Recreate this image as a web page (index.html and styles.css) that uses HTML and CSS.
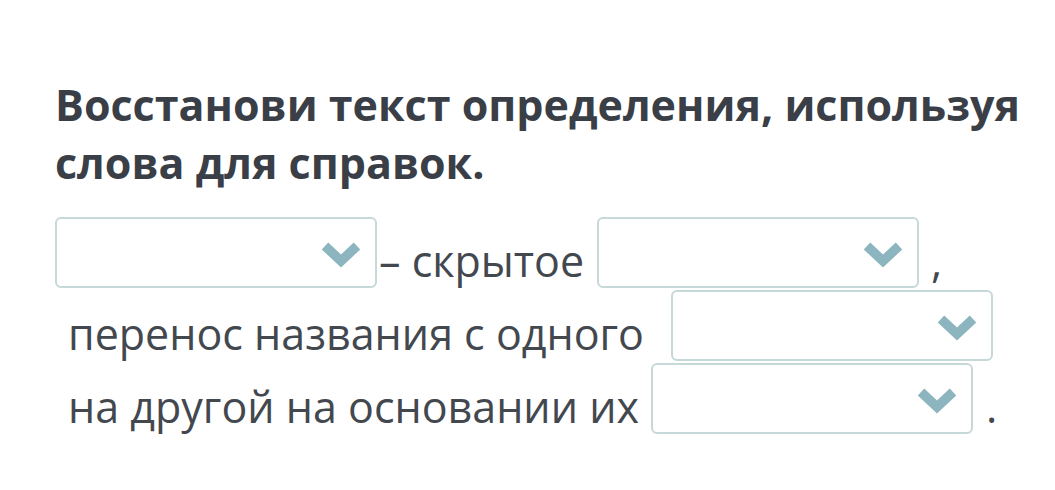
FILE: index.html
```html
<!DOCTYPE html>
<html lang="ru">
<head>
<meta charset="utf-8">
<link rel="stylesheet" href="styles.css">
</head>
<body>
<main class="task">
  <h1 class="title">Восстанови текст определения, используя слова для справок.</h1>
  <div class="cloze">
    <div class="line">
      <div class="select"><svg class="chev" viewBox="0 0 40 27"><polyline points="4,5 20,20 36,5"/></svg></div>
      <span class="word dash">– скрытое</span>
      <div class="select"><svg class="chev" viewBox="0 0 40 27"><polyline points="4,5 20,20 36,5"/></svg></div>
      <span class="word comma">,</span>
    </div>
    <div class="line">
      <span class="word text">перенос названия с одного</span>
      <div class="select sel-3"><svg class="chev" viewBox="0 0 40 27"><polyline points="4,5 20,20 36,5"/></svg></div>
    </div>
    <div class="line">
      <span class="word text">на другой на основании их</span>
      <div class="select sel-4"><svg class="chev" viewBox="0 0 40 27"><polyline points="4,5 20,20 36,5"/></svg></div>
      <span class="word period">.</span>
    </div>
  </div>
</main>
</body>
</html>
```

FILE: styles.css
```css
html, body {
  margin: 0;
  padding: 0;
  background: #ffffff;
}
.task {
  padding: 76px 0 0 55px;
  font-family: "Open Sans", "Noto Sans", sans-serif;
}
.title {
  margin: 0;
  font-size: 43px;
  font-weight: 700;
  line-height: 58px;
  color: #3a3f47;
  width: 990px;
}
.cloze {
  margin-top: 25px;
  display: flex;
  flex-direction: column;
  gap: 2px;
  color: #43484f;
  font-size: 43px;
}
.line {
  display: flex;
  align-items: flex-start;
  height: 71px;
}
.select {
  box-sizing: border-box;
  width: 322px;
  height: 71px;
  border: 2px solid #c7d8d9;
  border-radius: 6px;
  background: #fff;
  display: flex;
  align-items: center;
  justify-content: flex-end;
  padding: 4px 14px 0 0;
  flex-shrink: 0;
}
.chev {
  width: 40px;
  height: 27px;
  fill: none;
  stroke: #8db5bf;
  stroke-width: 9.5;
  stroke-linejoin: miter;
}
.word {
  line-height: 56px;
  padding-top: 16px;
  white-space: nowrap;
}
.dash {
  margin-left: 2px;
  margin-right: 13px;
}
.text {
  margin-left: 13px;
}
.comma {
  margin-left: 12px;
}
.sel-3 { margin-left: 27px; }
.sel-4 { margin-left: 12px; }
.period {
  margin-left: 13px;
}
```
